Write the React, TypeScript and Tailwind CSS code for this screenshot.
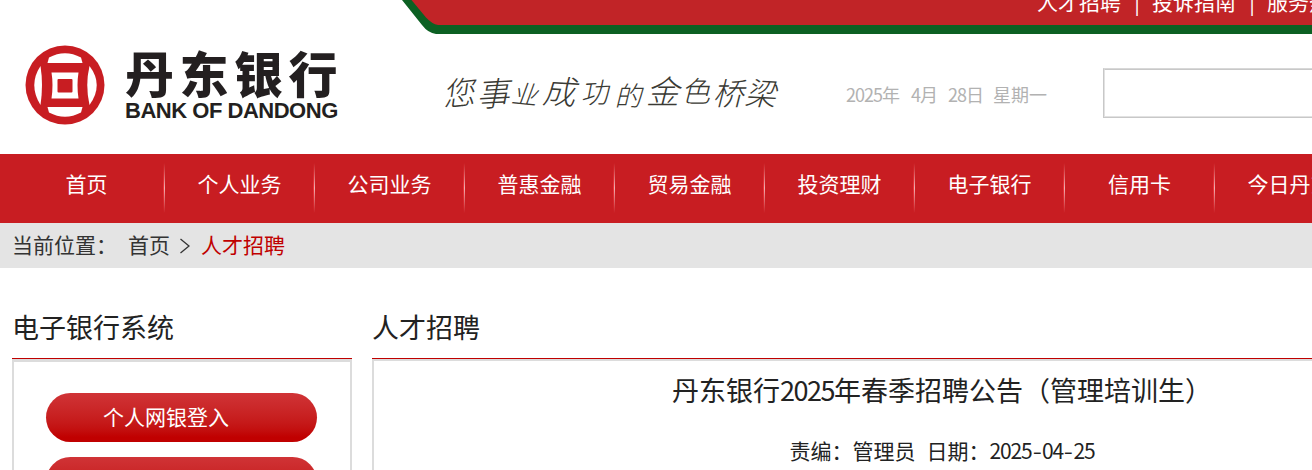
const NAV_ITEMS = ["首页", "个人业务", "公司业务", "普惠金融", "贸易金融", "投资理财", "电子银行", "信用卡", "今日丹东"]

const TOP_LINKS = ["人才招聘", "投诉指南", "服务热线"]

// slogan characters sit unevenly on the baseline, like handwriting
const SLOGAN = [
  { char: "您", cls: "w-[36px] text-[32px] -rotate-6" },
  { char: "事", cls: "w-[32px] text-[33px] translate-y-[1px] -rotate-3" },
  { char: "业", cls: "w-[33px] text-[26px] translate-y-[2px] rotate-6" },
  { char: "成", cls: "w-[36px] text-[33px] -translate-y-[1px] rotate-3" },
  { char: "功", cls: "w-[34px] text-[28px] -rotate-3" },
  { char: "的", cls: "w-[34px] text-[27px] translate-y-[3px]" },
  { char: "金", cls: "w-[35px] text-[33px] -translate-y-[1px]" },
  { char: "色", cls: "w-[31px] text-[29px] -translate-y-[2px]" },
  { char: "桥", cls: "w-[34px] text-[31px]" },
  { char: "梁", cls: "w-[30px] text-[31px] rotate-3" },
]

function LogoMark() {
  return (
    <svg viewBox="0 0 80 80" className="size-[80px] shrink-0">
      <circle cx="40" cy="40" r="39.5" fill="#c81d22" />
      <g fill="#fff">
        <path d="M24 12.500 Q40 4 56 12.500 L57.500 18 H22.500Z" />
        <path d="M24 67.500 Q40 76 56 67.500 L57.500 62 H22.500Z" />
        <path d="M15.500 21 Q3 40 15.500 60 Q18.500 40 15.500 21Z" />
        <path d="M64.500 21 Q79 40 64.500 60 Q60 40 64.500 21Z" />
        <path d="M26.500 27.500 H53.500 Q51.500 40 53.500 53.500 H26.500 Q28.500 40 26.500 27.500Z" />
      </g>
      <rect x="32.500" y="34" width="15" height="13.500" rx="1" fill="#c81d22" />
    </svg>
  )
}

function Header() {
  return (
    <header className="h-[154px]">
      <div className="flex h-[34px] pl-[400px]">
        <svg viewBox="0 0 38 34" className="h-[34px] w-[38px] shrink-0">
          <path d="M2 0 L22 25 Q28 33 36 34 H38 V0Z" fill="#0c6023" />
          <path d="M11.500 0 L26 17.500 Q32 24 38 25 V0Z" fill="#c12427" />
        </svg>
        <div className="flex h-[34px] flex-1 overflow-hidden border-b-[9px] border-[#0c6023] bg-[#c12427] pl-[599px] text-[21px] leading-[30px] text-white">
          {TOP_LINKS.map((label, i) => (
            <div key={label} className="-mt-[14px] flex shrink-0">
              {i > 0 && <span className="w-[31px] pl-px text-center">|</span>}
              <span>{label}</span>
            </div>
          ))}
        </div>
      </div>

      <div className="flex h-[120px] pl-[25px]">
        <div className="flex w-[415px] shrink-0 pt-[11px]">
          <LogoMark />
          <div className="pl-[20px] text-[#231f20]">
            <p className="text-[49px] font-black leading-[53px] tracking-[5.500px]">丹东银行</p>
            <p className="font-['Liberation_Sans'] text-[22px] font-bold leading-[25px] tracking-[-0.480px]">BANK OF DANDONG</p>
          </div>
        </div>
        <div className="flex w-[406px] shrink-0 items-center pb-[6px] font-light italic leading-none text-[#3a3a34]">
          {SLOGAN.map((s) => (
            <span key={s.char} className={`shrink-0 text-center ${s.cls}`}>{s.char}</span>
          ))}
        </div>
        <p className="w-[257px] shrink-0 whitespace-pre pt-[47px] text-[18px] leading-[27px] text-[#b2b2b2]">
          <Digits>2025</Digits>年<span className="inline-block w-[11px]" />
          <Digits>4</Digits>月<span className="inline-block w-[10px]" />
          <Digits>28</Digits>日<span className="inline-block w-[9px]" />星期一
        </p>
        <div className="mt-[34px] h-[50px] w-[300px] shrink-0 border border-[#d8d8d8] border-b-[#c8c8c8] border-l-[#c8c8c8]">
          <input className="block h-[48px] w-full border border-[#e2e2e2] border-t-[#c8c8c8] bg-white" />
        </div>
      </div>
    </header>
  )
}

// half-width figures
function Digits({ children }: { children: string }) {
  return <span className="tracking-[-0.055em]">{children}</span>
}

export default function App() {
  return (
    <div className="h-[470px] w-[1312px] overflow-hidden bg-white font-['Noto_Sans_CJK_SC',sans-serif] text-[21px] text-[#222]">
      <Header />

      <nav className="flex h-[69px] bg-[#c81d22] pl-[15px] text-white">
        {NAV_ITEMS.map((item, i) => (
          <div key={item} className="flex w-[150px] shrink-0">
            <a className={`flex-1 text-center leading-[58px] ${i === 0 ? "pr-[5px]" : "pl-px"}`}>{item}</a>
            <i className="mt-[9px] h-[50px] w-px bg-linear-to-b from-transparent via-[#f03038] to-transparent" />
            <i className="mt-[9px] h-[50px] w-px bg-linear-to-b from-transparent via-[#f0b0b0] to-transparent" />
          </div>
        ))}
      </nav>

      <div className="flex h-[45px] bg-[#e4e4e4] pl-[12px] leading-[43px] text-[#333]">
        <span className="w-[116px]">当前位置：</span>
        <span className="w-[52px]">首页</span>
        <svg viewBox="0 0 10 16" className="mt-[15px] h-[16px] w-[10px]" fill="none" stroke="#333" strokeWidth="1.300">
          <path d="M0.500 1 L9 8 L0.500 15" />
        </svg>
        <span className="pl-[11px] text-[#c00000]">人才招聘</span>
      </div>

      <main className="flex gap-[20px] pl-[12px] pt-[36px]">
        <section className="w-[340px] shrink-0">
          <h2 className="h-[54px] text-[27px] leading-[46px]">电子银行系统</h2>
          <div className="h-[120px] border-t border-[#c00000]">
            <div className="flex h-full flex-col items-center gap-[15px] border-x-2 border-t-[3px] border-[#dcdcdc] pt-[31px] pr-px text-white">
              <button className="h-[49px] w-[271px] shrink-0 rounded-full bg-linear-to-b from-[#d03336] to-[#c00000] to-90% pb-[2px] pr-[31px]">个人网银登入</button>
              <button className="h-[49px] w-[271px] shrink-0 rounded-full bg-linear-to-b from-[#d03336] to-[#c00000] to-90%" />
            </div>
          </div>
        </section>

        <section className="w-[1140px] shrink-0">
          <h2 className="h-[54px] text-[27px] leading-[46px]">人才招聘</h2>
          <div className="h-[120px] border-t border-[#c00000]">
            <div className="h-full border-x-2 border-t-2 border-[#dcdcdc] text-center">
              <h1 className="pt-[9px] text-[27px] leading-[40px]">
                丹东银行<Digits>2025</Digits>年春季招聘公告（管理培训生）
              </h1>
              <p className="pt-[24px] leading-[32px]">
                责编：管理员<span className="inline-block w-[11px]" />日期：<Digits>2025</Digits>
                <span className="inline-block w-[10.500px] scale-x-125">-</span><Digits>04</Digits>
                <span className="inline-block w-[10.500px] scale-x-125">-</span><Digits>25</Digits>
              </p>
            </div>
          </div>
        </section>
      </main>
    </div>
  )
}
